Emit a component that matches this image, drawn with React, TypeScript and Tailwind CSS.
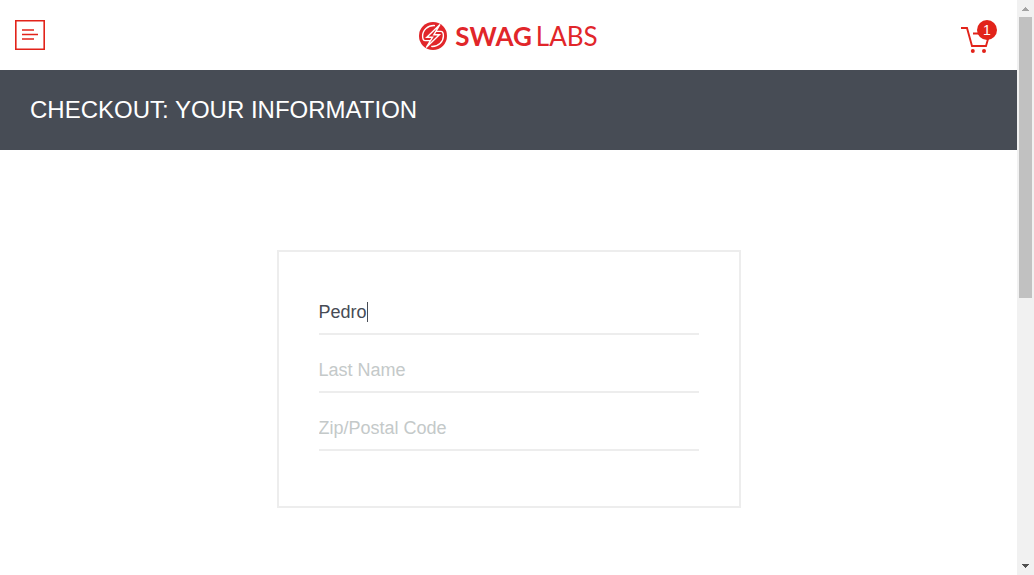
import { useState } from "react";

function BoltLogo() {
  return (
    <svg viewBox="0 0 28 28" className="size-7 shrink-0" aria-hidden="true">
      <circle cx="14" cy="14" r="14" fill="#e1262a" />
      <path
        d="M21 2.5 7.8 15.2h5.8L7.2 25.5 20.4 12.8h-5.6zM16 3.6C8.500 3 3.600 8.400 3.600 14c0 2.500 1 4.600 2.600 4.600h5M12.200 24.400c7.300.600 12.200-4.800 12.200-10.400 0-2.500-1-4.600-2.600-4.600h-4.600"
        fill="none"
        stroke="#fff"
        strokeWidth="1.4"
      />
    </svg>
  );
}

function CartIcon() {
  return (
    <svg viewBox="0 0 28 27" className="h-[27px] w-7" fill="none" aria-hidden="true">
      <path d="M0 2h6l5 18h14l4-14M12 7.5h14" stroke="#e2231a" strokeWidth="1.9" />
      <circle cx="11.8" cy="25" r="2" fill="#e2231a" />
      <circle cx="23" cy="25" r="2" fill="#e2231a" />
    </svg>
  );
}

function Field(props: {
  id: string;
  label: string;
  value: string;
  onChange: (value: string) => void;
}) {
  return (
    <div className="relative mb-[15px]">
      <input
        id={props.id}
        type="text"
        aria-label={props.label}
        placeholder={props.label}
        value={props.value}
        onChange={(e) => props.onChange(e.target.value)}
        className="block h-[43px] w-full border-b-2 border-[#ededed] bg-transparent text-lg text-[#474c55] caret-transparent outline-none placeholder:text-[#c4c9c9]"
      />
      {props.value === "Pedro" && (
        <span className="absolute top-2.5 left-12 h-5 w-px bg-[#474c55]" />
      )}
    </div>
  );
}

function Scrollbar() {
  return (
    <div className="sticky top-0 flex h-screen w-[17px] shrink-0 flex-col items-center bg-[#f1f1f1]" aria-hidden="true">
      <svg viewBox="0 0 17 17" className="size-[17px] shrink-0" shapeRendering="crispEdges">
        <path d="M5 11h7L8.5 7z" fill="#a3a3a3" />
      </svg>
      <div className="flex w-[13px] grow flex-col">
        <div className="h-[52%] bg-[#c1c1c1]" />
      </div>
      <svg viewBox="0 0 17 17" className="size-[17px] shrink-0" shapeRendering="crispEdges">
        <path d="M5 6h7L8.5 10z" fill="#505050" />
      </svg>
    </div>
  );
}

export default function App() {
  const [first, setFirst] = useState("Pedro");
  const [last, setLast] = useState("");
  const [zip, setZip] = useState("");

  return (
    <div className="flex min-h-screen bg-white font-['Liberation_Sans',Arial,sans-serif]">
      <div className="min-w-0 grow">
        <header className="grid h-[70px] grid-cols-[1fr_auto_1fr] items-center px-[15px]">
          <button type="button" aria-label="Open Menu" className="size-[30px]">
            <svg viewBox="0 0 30 30" className="size-[30px]" fill="none" stroke="#e2231a" strokeWidth="1.6">
              <path d="M.8 .8h28.4v28.4H.8z" />
              <path d="M7 10h12M7 14.5h16M7 19h12" />
            </svg>
          </button>
          <div className="flex items-center gap-2 pt-0.5 text-[#e1262a]">
            <BoltLogo />
            <span className="flex gap-1 font-[Lato,sans-serif] text-[26px] leading-7">
              <span className="font-bold">SWAG</span>
              <span>LABS</span>
            </span>
          </div>
          <a href="#cart" aria-label="Cart" className="relative mt-2 mr-[13px] justify-self-end">
            <CartIcon />
            <span className="absolute -top-1.5 -right-2 flex size-5 items-center justify-center rounded-full bg-[#e2231a] text-sm text-white">
              1
            </span>
          </a>
        </header>

        <div className="flex h-20 items-center bg-[#474c55] px-[30px]">
          <h1 className="text-2xl text-white">CHECKOUT: YOUR INFORMATION</h1>
        </div>

        <main className="px-5 pt-[100px]">
          <form className="mx-auto w-full max-w-[464px] border-2 border-[#ededed] p-10">
            <Field id="first-name" label="First Name" value={first} onChange={setFirst} />
            <Field id="last-name" label="Last Name" value={last} onChange={setLast} />
            <Field id="postal-code" label="Zip/Postal Code" value={zip} onChange={setZip} />
          </form>
        </main>
      </div>
      <Scrollbar />
    </div>
  );
}
